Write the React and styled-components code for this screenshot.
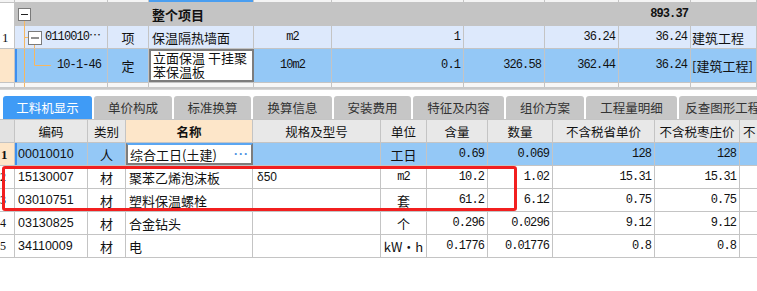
import React from 'react';
import styled, { createGlobalStyle } from 'styled-components';

const GlobalStyle = createGlobalStyle`
  body {
    margin: 0;
    background: #fff;
  }
  * {
    box-sizing: border-box;
  }
`;

const CJK = `"Noto Sans CJK SC", "Liberation Sans", sans-serif`;
const MONO = `"Liberation Mono", "Noto Sans CJK SC", monospace`;
const SANS = `"Liberation Sans", "Noto Sans CJK SC", sans-serif`;
const SERIF = `"Liberation Serif", "Noto Sans CJK SC", serif`;

const LINE = '#c4c4c4';
const PEACH = '#fde6c9';
const SELECTED = '#94c8f6';
const TREE = '#f6b762';

const TOP_COLS = [15, 93, 41, 105, 78, 132, 81, 74, 72, 66];
const BOTTOM_COLS = [15, 73, 38, 127, 128, 46, 61, 65, 102, 85, 40];

const fonts = { cjk: CJK, mono: MONO, sans: SANS, serif: SERIF };

const Page = styled.div`
  position: relative;
  width: 757px;
  height: 291px;
  overflow: hidden;
  background: #fff;
  color: #111;
`;

const Row = styled.div`
  display: flex;
  height: ${p => p.$h || 23}px;
  background: ${p => p.$bg || '#fff'};
  border-bottom: ${p => (p.$noLine ? 'none' : `1px solid ${LINE}`)};
`;

const Cell = styled.div`
  position: relative;
  flex: 0 0 ${p => p.$w}px;
  display: flex;
  align-items: center;
  justify-content: ${p =>
    p.$align === 'right' ? 'flex-end' : p.$align === 'center' ? 'center' : 'flex-start'};
  padding: 0 ${p => (p.$pad === undefined ? 3 : p.$pad)}px;
  border-right: ${p => (p.$plain ? 'none' : `1px solid ${LINE}`)};
  background: ${p => p.$bg || 'transparent'};
  font-family: ${p => fonts[p.$font || 'cjk']};
  font-size: ${p => p.$size || 13}px;
  font-weight: ${p => (p.$bold ? 700 : 400)};
  letter-spacing: ${p => (p.$font === 'mono' ? '-0.9px' : '0')};
  line-height: 15px;
  white-space: nowrap;
  overflow: hidden;
  color: ${p => p.$color || '#111'};
`;

const EditCell = styled(Cell)`
  background: #fff;
  border: 2px solid #7d7d7d;
  border-top-color: ${p => p.$topColor || '#7d7d7d'};
  white-space: normal;
  align-items: ${p => (p.$top ? 'flex-start' : 'center')};
  padding: ${p => (p.$top ? '0 2px' : '0 2px')};
  line-height: ${p => (p.$top ? 14 : 15)}px;
  justify-content: space-between;
`;

const Ellipsis = styled.span`
  color: #4a90e2;
  font-family: ${SANS};
  font-size: 12px;
  font-weight: 700;
  letter-spacing: 1px;
  margin-right: 0;
`;

const TreeSvg = styled.svg`
  position: absolute;
  left: 0;
  top: 0;
  pointer-events: none;
`;

const TreeText = styled.span`
  margin-left: ${p => p.$indent}px;
  font-family: ${MONO};
  font-size: 12px;
  letter-spacing: -0.9px;
`;

const GrayBar = styled.div`
  height: 2px;
  background: #c9c9c9;
`;

const TabBar = styled.div`
  display: flex;
  gap: 2px;
  height: 30px;
  padding: 6px 0 0 3px;
  border-top: 1px solid #d6d6d6;
  background: #fff;
`;

const Tab = styled.div`
  flex: 0 0 ${p => p.$w}px;
  display: flex;
  align-items: center;
  justify-content: center;
  border-radius: 3px 3px 0 0;
  background: ${p => (p.$active ? '#3f9bf6' : '#c6c6c6')};
  color: ${p => (p.$active ? '#fff' : '#333')};
  font-family: ${CJK};
  font-size: 12.5px;
  white-space: nowrap;
  overflow: hidden;
`;

const HeadRow = styled(Row)`
  background: #e8e8e8;
  border-top: 1px solid ${LINE};
`;

const Annotation = styled.div`
  position: absolute;
  left: 2px;
  top: 166px;
  width: 515px;
  height: 45px;
  border: 3px solid #f21f1f;
  border-radius: 3px;
  pointer-events: none;
`;

const Minus = ({ x, y, s }) => (
  <g>
    <rect x={x + 0.5} y={y + 0.5} width={s} height={s} fill="#fff" stroke="#7a7a7a" />
    <line x1={x + 3} y1={y + s / 2 + 0.5} x2={x + s - 2} y2={y + s / 2 + 0.5} stroke="#222" />
  </g>
);

const Tree = ({ level, h }) => (
  <TreeSvg width="93" height={h}>
    {level === 0 && (
      <>
        <line x1="9.5" y1="17" x2="9.5" y2={h} stroke={TREE} />
        <Minus x={3} y={5} s={12} />
      </>
    )}
    {level === 1 && (
      <>
        <line x1="9.5" y1="0" x2="9.5" y2={h} stroke={TREE} />
        <line x1="9.5" y1="11.5" x2="13" y2="11.5" stroke={TREE} />
        <line x1="19.5" y1="18" x2="19.5" y2={h} stroke={TREE} />
        <Minus x={13} y={5} s={13} />
      </>
    )}
    {level === 2 && (
      <>
        <line x1="9.5" y1="0" x2="9.5" y2={h} stroke={TREE} />
        <line x1="19.5" y1="0" x2="19.5" y2="16.5" stroke={TREE} />
        <line x1="19.5" y1="16.5" x2="36" y2="16.5" stroke={TREE} />
      </>
    )}
    {level === 3 && <line x1="9.5" y1="0" x2="9.5" y2={h} stroke={TREE} />}
  </TreeSvg>
);

const TABS = [
  ['工料机显示', 89, true],
  ['单价构成', 78],
  ['标准换算', 77],
  ['换算信息', 79],
  ['安装费用', 77],
  ['特征及内容', 91],
  ['组价方案', 78],
  ['工程量明细', 91],
  ['反查图形工程量', 100],
];

const HEADERS = ['', '编码', '类别', '名称', '规格及型号', '单位', '含量', '数量', '不含税省单价', '不含税枣庄价', '不'];

const ROWS = [
  ['2', '15130007', '材', '聚苯乙烯泡沫板', 'δ50', 'm2', '10.2', '1.02', '15.31', '15.31'],
  ['3', '03010751', '材', '塑料保温螺栓', '', '套', '61.2', '6.12', '0.75', '0.75'],
  ['4', '03130825', '材', '合金钻头', '', '个', '0.296', '0.0296', '9.12', '9.12'],
  ['5', '34110009', '材', '电', '', 'kW·h', '0.1776', '0.01776', '0.8', '0.8'],
];

const isAscii = s => /^[\x00-\x7f]*$/.test(s);

const UnitCell = ({ w, value }) =>
  isAscii(value) ? (
    <Cell $w={w} $align="center" $font="mono" $size={12}>{value}</Cell>
  ) : (
    <Cell $w={w} $align="center">{value}</Cell>
  );

export default function App() {
  const T = TOP_COLS;
  const B = BOTTOM_COLS;
  return (
    <Page>
      <GlobalStyle />

      <Row $h={3} $bg="#f4f4f4">
        {T.map((w, i) => (
          <Cell key={i} $w={w} $bg={i === 3 ? '#4a9ef0' : undefined} />
        ))}
      </Row>

      <Row $h={23} $bg="#c4c4c4" $noLine>
        <Cell $w={T[0]} $bg="#fff" />
        <Cell $w={T[1]} $plain><Tree level={0} h={23} /></Cell>
        <Cell $w={T[2]} $plain />
        <Cell $w={T[3]} $plain $bold>整个项目</Cell>
        <Cell $w={T[4]} $plain />
        <Cell $w={T[5]} $plain />
        <Cell $w={T[6]} $plain />
        <Cell $w={T[7]} $plain />
        <Cell $w={T[8]} $plain $align="right" $font="mono" $size={12} $bold>893.37</Cell>
        <Cell $w={T[9]} $plain />
      </Row>

      <Row $h={23} $bg="#dde9fc">
        <Cell $w={T[0]} $bg="#fff" $font="serif" $pad={2}>1</Cell>
        <Cell $w={T[1]} $pad={0}>
          <Tree level={1} h={23} />
          <TreeText $indent={30}>0110010⋯</TreeText>
        </Cell>
        <Cell $w={T[2]} $align="center">项</Cell>
        <Cell $w={T[3]}>保温隔热墙面</Cell>
        <Cell $w={T[4]} $align="center" $font="mono" $size={12}>m2</Cell>
        <Cell $w={T[5]} $align="right" $font="mono" $size={12}>1</Cell>
        <Cell $w={T[6]} />
        <Cell $w={T[7]} $align="right" $font="mono" $size={12}>36.24</Cell>
        <Cell $w={T[8]} $align="right" $font="mono" $size={12}>36.24</Cell>
        <Cell $w={T[9]} $pad={1}>建筑工程</Cell>
      </Row>

      <Row $h={34} $bg={SELECTED}>
        <Cell $w={T[0]} $bg={PEACH} />
        <Cell $w={T[1]} $pad={0} style={{ boxShadow: 'inset 2px 0 #3d8ff0' }}>
          <Tree level={2} h={34} />
          <TreeText $indent={42}>10-1-46</TreeText>
        </Cell>
        <Cell $w={T[2]} $align="center">定</Cell>
        <EditCell $w={T[3]} $top>立面保温 干挂聚苯保温板</EditCell>
        <Cell $w={T[4]} $align="center" $font="mono" $size={12}>10m2</Cell>
        <Cell $w={T[5]} $align="right" $font="mono" $size={12}>0.1</Cell>
        <Cell $w={T[6]} $align="right" $font="mono" $size={12}>326.58</Cell>
        <Cell $w={T[7]} $align="right" $font="mono" $size={12}>362.44</Cell>
        <Cell $w={T[8]} $align="right" $font="mono" $size={12}>36.24</Cell>
        <Cell $w={T[9]} $pad={1}>[建筑工程]</Cell>
      </Row>

      <Row $h={4} $bg="#f7f7f7" $noLine>
        {T.map((w, i) => (
          <Cell key={i} $w={w} $pad={0}>{i === 1 && <Tree level={3} h={4} />}</Cell>
        ))}
      </Row>
      <GrayBar />

      <TabBar>
        {TABS.map(([label, w, active]) => (
          <Tab key={label} $w={w} $active={active}>{label}</Tab>
        ))}
      </TabBar>

      <HeadRow $h={24}>
        {HEADERS.map((h, i) => (
          <Cell
            key={i}
            $w={B[i]}
            $align={i === 10 ? 'left' : 'center'}
            $size={12.5}
            $bold={i === 3}
            $bg={i === 3 ? PEACH : i === 0 ? '#e2e2e2' : undefined}
          >
            {h}
          </Cell>
        ))}
      </HeadRow>

      <Row $h={23} $bg={SELECTED}>
        <Cell $w={B[0]} $bg={PEACH} $font="serif" $bold $pad={1}>1</Cell>
        <Cell $w={B[1]} $font="sans" $size={12.5} style={{ boxShadow: 'inset 2px 0 #3d8ff0' }}>00010010</Cell>
        <Cell $w={B[2]} $align="center">人</Cell>
        <EditCell $w={B[3]} $topColor="#5aa6f2">
          综合工日(土建)
          <Ellipsis>···</Ellipsis>
        </EditCell>
        <Cell $w={B[4]} />
        <Cell $w={B[5]} $align="center">工日</Cell>
        <Cell $w={B[6]} $align="right" $font="mono" $size={12}>0.69</Cell>
        <Cell $w={B[7]} $align="right" $font="mono" $size={12}>0.069</Cell>
        <Cell $w={B[8]} $align="right" $font="mono" $size={12}>128</Cell>
        <Cell $w={B[9]} $align="right" $font="mono" $size={12}>128</Cell>
        <Cell $w={B[10]} />
      </Row>

      {ROWS.map(r => (
        <Row key={r[0]} $h={23}>
          <Cell $w={B[0]} $font="serif" $size={12} $pad={0}>{r[0]}</Cell>
          <Cell $w={B[1]} $font="sans" $size={12.5}>{r[1]}</Cell>
          <Cell $w={B[2]} $align="center">{r[2]}</Cell>
          <Cell $w={B[3]}>{r[3]}</Cell>
          <Cell $w={B[4]} $font="sans" $size={12} $pad={4}>{r[4]}</Cell>
          <UnitCell w={B[5]} value={r[5]} />
          <Cell $w={B[6]} $align="right" $font="mono" $size={12}>{r[6]}</Cell>
          <Cell $w={B[7]} $align="right" $font="mono" $size={12}>{r[7]}</Cell>
          <Cell $w={B[8]} $align="right" $font="mono" $size={12}>{r[8]}</Cell>
          <Cell $w={B[9]} $align="right" $font="mono" $size={12}>{r[9]}</Cell>
          <Cell $w={B[10]} />
        </Row>
      ))}

      <Annotation />
    </Page>
  );
}
